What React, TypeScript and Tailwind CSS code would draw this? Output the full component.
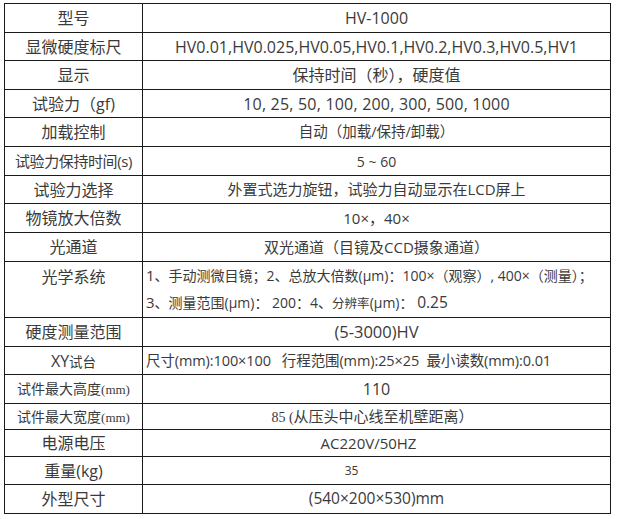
import React from "react";

type Row = { label: React.ReactNode; value: React.ReactNode; h: string; align?: "left" | "center" };

const BASE = "font-['Open_Sans','Noto_Sans_CJK_SC',sans-serif]";
const SERIF = "font-['Liberation_Serif','Noto_Sans_CJK_SC',serif]";

const rows: Row[] = [
  { label: "型号", value: "HV-1000", h: "h-[28px]" },
  { label: "显微硬度标尺", value: "HV0.01,HV0.025,HV0.05,HV0.1,HV0.2,HV0.3,HV0.5,HV1", h: "h-[28px]" },
  { label: "显示", value: "保持时间（秒），硬度值", h: "h-[29px]" },
  { label: "试验力（gf)", value: <span className="tracking-[0.2px]">10, 25, 50, 100, 200, 300, 500, 1000</span>, h: "h-[28px]" },
  { label: "加载控制", value: <span className="text-[14.5px]">自动（加载/保持/卸载）</span>, h: "h-[29px]" },
  { label: <span className="text-[15px] tracking-[-0.4px]">试验力保持时间(s)</span>, value: <span className="text-[14px]">5 ~ 60</span>, h: "h-[29px]" },
  { label: "试验力选择", value: <span className="text-[15px]">外置式选力旋钮，试验力自动显示在LCD屏上</span>, h: "h-[28px]" },
  { label: "物镜放大倍数", value: <span className="text-[15px]">10×，40×</span>, h: "h-[29px]" },
  { label: "光通道", value: <span className="text-[15px]">双光通道（目镜及CCD摄象通道）</span>, h: "h-[29px]" },
  {
    label: <span className="block -mt-[26px]">光学系统</span>,
    value: (
      <div className="text-[14px] leading-[26px]">
        <div>
          <span className="text-[15px]">1</span>、手动测微目镜；2、总放大倍数(μm)：100×（观察）, 400×（测量）；
        </div>
        <div>
          <span className="text-[15px]">3</span>、测量范围(μm)：&nbsp;200：4、<span className="text-[12.5px]">分辨率</span>(μm)：&nbsp;<span className="text-[15.5px]">0.25</span>
        </div>
      </div>
    ),
    h: "h-[56px]",
    align: "left",
  },
  { label: "硬度测量范围", value: <span className="text-[16.5px]">(5-3000)HV</span>, h: "h-[29px]" },
  {
    label: (
      <span>
        <span className="text-[16px]">XY</span>
        <span className="text-[13.5px]">试台</span>
      </span>
    ),
    value: <span className="text-[14.5px] tracking-[-0.1px]">尺寸(mm):100×100&nbsp;&nbsp; 行程范围(mm):25×25&nbsp; 最小读数(mm):0.01</span>,
    h: "h-[28px]",
    align: "left",
  },
  {
    label: (
      <span className="text-[14px]">
        试件最大高度<span className={`${SERIF} text-[13px]`}>(mm)</span>
      </span>
    ),
    value: "110",
    h: "h-[29px]",
  },
  {
    label: (
      <span className="text-[14px]">
        试件最大宽度<span className={`${SERIF} text-[13px]`}>(mm)</span>
      </span>
    ),
    value: (
      <span className="pr-[8px] text-[15px]">
        <span className={`${SERIF} text-[14px]`}>85 (</span>从压头中心线至机壁距离）
      </span>
    ),
    h: "h-[26px]",
  },
  { label: "电源电压", value: <span className="pr-[16px] text-[15px]">AC220V/50HZ</span>, h: "h-[27px]" },
  { label: "重量(kg)", value: <span className="pr-[50px] text-[12px]">35</span>, h: "h-[28px]" },
  { label: "外型尺寸", value: <span className="text-[15.5px]">(540×200×530)mm</span>, h: "h-[29px]" },
];

export default function App() {
  return (
    <div className={`min-h-[519px] w-[622px] bg-white pl-[4px] pt-[3px] text-[#3a3a3a] ${BASE}`}>
      <div className="w-[607px] border border-[#1a1a1a]">
        {rows.map((r, i) => (
          <div key={i} className={`flex ${r.h} ${i > 0 ? "border-t border-[#1a1a1a]" : ""}`}>
            <div className="flex w-[138px] shrink-0 items-center justify-center border-r border-[#1a1a1a] text-[16px] whitespace-nowrap">
              {r.label}
            </div>
            <div
              className={`flex flex-1 items-center text-[16px] whitespace-nowrap ${
                r.align === "left" ? "justify-start pl-[3px]" : "justify-center"
              }`}
            >
              {r.value}
            </div>
          </div>
        ))}
      </div>
    </div>
  );
}
